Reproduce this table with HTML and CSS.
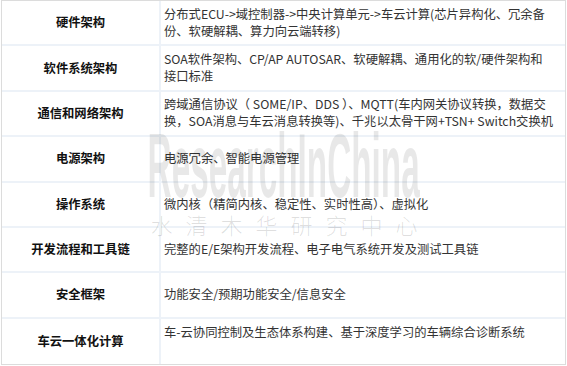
FILE: index.html
```html
<!DOCTYPE html>
<html lang="zh-CN">
<head>
<meta charset="utf-8">
<title>架构</title>
<link rel="stylesheet" href="styles.css">
</head>
<body>
<div class="page">
  <div class="table">
    <div class="cell label">硬件架构</div>
    <div class="cell text">分布式ECU-&gt;域控制器-&gt;中央计算单元-&gt;车云计算(芯片异构化、冗余备<br>份、软硬解耦、算力向云端转移)</div>

    <div class="cell label">软件系统架构</div>
    <div class="cell text">SOA软件架构、CP/AP AUTOSAR、软硬解耦、通用化的软/硬件架构和<br>接口标准</div>

    <div class="cell label">通信和网络架构</div>
    <div class="cell text">跨域通信协议（ SOME/IP、DDS ）、MQTT(车内网关协议转换，数据交<br>换，SOA消息与车云消息转换等)、千兆以太骨干网+TSN+ Switch交换机</div>

    <div class="cell label">电源架构</div>
    <div class="cell text">电源冗余、智能电源管理</div>

    <div class="cell label">操作系统</div>
    <div class="cell text">微内核（精简内核、稳定性、实时性高）、虚拟化</div>

    <div class="cell label">开发流程和工具链</div>
    <div class="cell text">完整的E/E架构开发流程、电子电气系统开发及测试工具链</div>

    <div class="cell label">安全框架</div>
    <div class="cell text">功能安全/预期功能安全/信息安全</div>

    <div class="cell label last">车云一体化计算</div>
    <div class="cell text top last">车-云协同控制及生态体系构建、基于深度学习的车辆综合诊断系统</div>
  </div>
  <div class="watermark">
    <div class="wm-en">ResearchInChina</div>
    <div class="wm-cn">水清木华研究中心</div>
  </div>
</div>
</body>
</html>
```
FILE: styles.css
```css
html, body {
  margin: 0;
  padding: 0;
  background: #ffffff;
}

.page {
  position: relative;
  width: 567px;
  height: 366px;
  padding: 0 1px 1px 1px;
  box-sizing: border-box;
}

.table {
  display: grid;
  grid-template-columns: 159px 1fr;
  grid-template-rows: repeat(8, 1fr);
  height: 365px;
  width: 565px;
  box-sizing: border-box;
  border: 1px solid #dcdcdc;
  font-family: "Noto Sans CJK SC", "Noto Sans", sans-serif;
  font-size: 12.3px;
  line-height: 17px;
}

.cell {
  display: flex;
  align-items: center;
  border-bottom: 2px solid #edf2f8;
  box-sizing: border-box;
}

.cell.last {
  border-bottom: none;
}

.label {
  justify-content: center;
  font-weight: 700;
  color: #111111;
  border-right: 2px solid #edf2f8;
}

.text {
  color: #333333;
  padding: 0 4px 0 3px;
  white-space: nowrap;
}

.text.top {
  align-items: flex-start;
  padding-top: 5px;
}

.watermark {
  position: absolute;
  left: 143px;
  top: 124px;
  width: 282px;
  pointer-events: none;
  display: flex;
  flex-direction: column;
  align-items: center;
}

.wm-en {
  font-family: "Liberation Sans", sans-serif;
  font-weight: 700;
  font-size: 90px;
  line-height: 84px;
  color: rgba(0, 0, 0, 0.09);
  transform: scaleX(0.37);
  transform-origin: center top;
  white-space: nowrap;
}

.wm-cn {
  font-family: "Noto Sans CJK SC", sans-serif;
  font-weight: 300;
  font-size: 22px;
  line-height: 26px;
  letter-spacing: 13px;
  margin-left: 13px;
  margin-top: 3px;
  color: rgba(0, 0, 0, 0.13);
  white-space: nowrap;
}
```
